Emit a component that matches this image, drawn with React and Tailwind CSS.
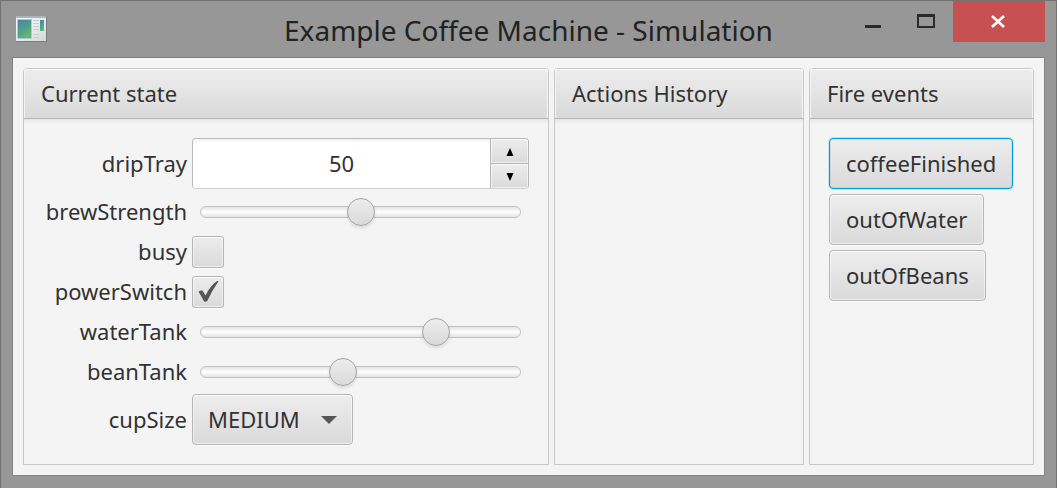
import React, { useState } from "react";

const raised =
  "border border-[#b5b5b5] bg-linear-to-b from-[#ededed] to-[#dadada] shadow-[inset_0_0_0_1px_rgba(255,255,255,0.55),inset_0_1px_0_#fcfcfc,0_1px_0_#fbfbfb]";

function AppIcon() {
  return (
    <svg className="ml-[15px] h-7 w-8 shrink-0" viewBox="0 0 32 28" aria-hidden="true">
      <defs>
        <linearGradient id="pane" x1="0" y1="0" x2="0.5" y2="1">
          <stop offset="0" stopColor="#4788a4" />
          <stop offset="0.5" stopColor="#4b9c90" />
          <stop offset="1" stopColor="#66b574" />
        </linearGradient>
        <linearGradient id="sheet" x1="0" y1="0" x2="1" y2="1">
          <stop offset="0" stopColor="#ffffff" />
          <stop offset="1" stopColor="#d5d8da" />
        </linearGradient>
      </defs>
      <rect x="0" y="2" width="31" height="25" fill="#7b7d7f" />
      <rect x="0" y="1" width="30" height="25" fill="url(#sheet)" />
      <rect x="0" y="1" width="30" height="2" fill="#a9b4c0" />
      <rect x="1" y="4" width="15" height="20" fill="#a9cdd0" />
      <rect x="2" y="5" width="13" height="18" fill="url(#pane)" />
      <g fill="#c9cccf">
        <rect x="17" y="5" width="6" height="1" />
        <rect x="17" y="8" width="6" height="1" />
        <rect x="17" y="11" width="6" height="1" />
        <rect x="17" y="14" width="6" height="1" />
        <rect x="17" y="19" width="6" height="1" />
        <rect x="17" y="22" width="6" height="1" />
      </g>
      <rect x="24" y="5" width="4" height="11" fill="url(#pane)" />
    </svg>
  );
}

function TitleBar() {
  return (
    <header className="flex h-14 items-start justify-between">
      <div className="flex h-14 w-[208px] items-center">
        <AppIcon />
      </div>
      <h1 className="flex h-14 grow items-center justify-center pt-px text-[28px] whitespace-nowrap text-[#222222]">
        Example Coffee Machine - Simulation
      </h1>
      <div className="flex w-[208px] justify-end pr-[11px]">
        <button type="button" aria-label="Minimize" className="flex h-10 w-13 shrink-0 items-center justify-center">
          <svg className="h-6 w-6" viewBox="0 0 24 24" aria-hidden="true">
            <rect x="2" y="16" width="16" height="3" fill="#2a2a2a" />
          </svg>
        </button>
        <button type="button" aria-label="Maximize" className="flex h-10 w-13 shrink-0 items-center justify-center">
          <svg className="h-6 w-6" viewBox="0 0 24 24" aria-hidden="true">
            <path fill="#2a2a2a" fillRule="evenodd" d="M2 5h18v14H2zM4 8v9h14V8z" />
          </svg>
        </button>
        <button type="button" aria-label="Close" className="flex h-[41px] w-[92px] shrink-0 items-center justify-center bg-[#c75050]">
          <svg className="h-6 w-6" viewBox="0 0 24 24" aria-hidden="true">
            <path d="M5 6l12 11M17 6L5 17" stroke="#fff" strokeWidth="2.6" />
          </svg>
        </button>
      </div>
    </header>
  );
}

function Panel({ title, className, children }) {
  return (
    <section className={`flex flex-col rounded-t-[4px] border border-[#c8c8c8] ${className}`}>
      <h2 className="flex h-[50px] items-center rounded-t-[3px] border-b border-[#b5b5b5] bg-linear-to-b from-[#ededed] to-[#dadada] px-[17px] pb-[2px] shadow-[inset_0_1px_0_#fcfcfc,inset_1px_0_0_#f3f3f3,inset_-1px_0_0_#f3f3f3]">
        {title}
      </h2>
      <div className="grow bg-linear-to-b from-[#e6e6e6] to-[#f4f4f4] to-[5px] px-[19px] py-[19px]">{children}</div>
    </section>
  );
}

function Spinner({ id, initial }) {
  const [value, setValue] = useState(initial);
  const step = (delta) => setValue((v) => Number(v) + delta);
  return (
    <div className="flex h-[51px] overflow-hidden rounded-[4px] border border-[#b9b9b9] border-b-[#cfcfcf] bg-white">
      <input
        id={id}
        type="text"
        inputMode="numeric"
        value={value}
        onChange={(e) => setValue(e.target.value)}
        className="w-0 grow bg-linear-to-b from-[#f0f0f0] to-white to-[4px] pb-[2px] text-center outline-none"
      />
      <div className="flex w-[38px] flex-col">
        <button type="button" aria-label="Increase" onClick={() => step(1)} className="flex grow items-center justify-center border-b border-l border-[#b5b5b5] bg-linear-to-b from-[#ededed] to-[#dadada] pt-[2px] shadow-[inset_0_0_0_1px_rgba(255,255,255,0.6)]">
          <svg className="h-2 w-2" viewBox="0 0 8 8" aria-hidden="true"><path d="M4 0L7.5 8H.5z" /></svg>
        </button>
        <button type="button" aria-label="Decrease" onClick={() => step(-1)} className="flex grow items-center justify-center border-l border-[#b5b5b5] bg-linear-to-b from-[#ededed] to-[#dadada] pt-[2px] shadow-[inset_0_0_0_1px_rgba(255,255,255,0.6)]">
          <svg className="h-2 w-2" viewBox="0 0 8 8" aria-hidden="true"><path d="M.5 0h7L4 8z" /></svg>
        </button>
      </div>
    </div>
  );
}

function Slider({ id, value }) {
  return (
    <div className="flex h-[35px] items-center px-2">
      <input
        id={id}
        type="range"
        defaultValue={value}
        className="h-7 w-full appearance-none bg-transparent [&::-webkit-slider-runnable-track]:h-3 [&::-webkit-slider-runnable-track]:rounded-full [&::-webkit-slider-runnable-track]:border [&::-webkit-slider-runnable-track]:border-[#c0c0c0] [&::-webkit-slider-runnable-track]:bg-linear-to-b [&::-webkit-slider-runnable-track]:from-[#e4e4e4] [&::-webkit-slider-runnable-track]:via-[#fefefe] [&::-webkit-slider-runnable-track]:to-[#e4e4e4] [&::-webkit-slider-thumb]:-mt-[9px] [&::-webkit-slider-thumb]:h-7 [&::-webkit-slider-thumb]:w-7 [&::-webkit-slider-thumb]:appearance-none [&::-webkit-slider-thumb]:rounded-full [&::-webkit-slider-thumb]:border [&::-webkit-slider-thumb]:border-[#a3a3a3] [&::-webkit-slider-thumb]:bg-linear-to-b [&::-webkit-slider-thumb]:from-[#ededed] [&::-webkit-slider-thumb]:to-[#dadada] [&::-webkit-slider-thumb]:shadow-[0_2px_3px_rgba(0,0,0,0.1)]"
      />
    </div>
  );
}

function Checkbox({ id, checked }) {
  return (
    <div className="flex h-[35px] items-center">
      <span className="grid">
        <input id={id} type="checkbox" defaultChecked={checked} className={`peer col-start-1 row-start-1 h-8 w-8 appearance-none rounded-[3px] ${raised}`} />
        <svg className="pointer-events-none invisible col-start-1 row-start-1 h-8 w-8 peer-checked:visible" viewBox="0 0 32 32" aria-hidden="true">
          <path fill="#565656" d="M6.5 15.5Q8.5 14 10.5 14.5L13.5 19.5Q18 10 25 5L26.5 5.2Q20 14.5 15.3 25Q13.5 26.5 12 25.2z" />
        </svg>
      </span>
    </div>
  );
}

function Select({ id, options, value }) {
  return (
    <div className="grid w-[161px]">
      <select id={id} defaultValue={value} className={`col-start-1 row-start-1 h-[51px] appearance-none rounded-[4px] pb-[2px] pl-[15px] ${raised}`}>
        {options.map((o) => (
          <option key={o}>{o}</option>
        ))}
      </select>
      <svg className="pointer-events-none col-start-1 row-start-1 mr-4 h-2 w-4 self-center justify-self-end" viewBox="0 0 16 8" aria-hidden="true">
        <path fill="#565656" d="M0 0h16L8 8z" />
      </svg>
    </div>
  );
}

function Label({ htmlFor }) {
  return (
    <label htmlFor={htmlFor} className="self-center pb-[2px] text-right">
      {htmlFor}
    </label>
  );
}

function EventButton({ name, focused }) {
  const look = focused
    ? "border border-[#039ed3] bg-linear-to-b from-[#ededed] to-[#dadada] shadow-[0_0_0_1px_rgba(3,158,211,0.2),inset_0_0_0_1px_rgba(3,158,211,0.12)]"
    : raised;
  return (
    <button type="button" className={`h-[51px] rounded-[4px] px-4 pb-[2px] ${look}`}>
      {name}
    </button>
  );
}

export default function App() {
  return (
    <div className="flex min-h-screen flex-col border border-[#737373] bg-[#979797] font-['Noto_Sans','Open_Sans',sans-serif] text-[22px] leading-8 text-[#323232]">
      <TitleBar />
      <main className="mx-[11px] mb-3 flex grow gap-[5px] border border-[#828282] bg-[#f4f4f4] p-[10px]">
        <Panel title="Current state" className="w-0 grow-[524]">
          <div className="grid grid-cols-[144px_minmax(0,1fr)] gap-[5px]">
            <Label htmlFor="dripTray" />
            <Spinner id="dripTray" initial={50} />
            <Label htmlFor="brewStrength" />
            <Slider id="brewStrength" value={50} />
            <Label htmlFor="busy" />
            <Checkbox id="busy" checked={false} />
            <Label htmlFor="powerSwitch" />
            <Checkbox id="powerSwitch" checked />
            <Label htmlFor="waterTank" />
            <Slider id="waterTank" value={76} />
            <Label htmlFor="beanTank" />
            <Slider id="beanTank" value={44} />
            <Label htmlFor="cupSize" />
            <Select id="cupSize" options={["SMALL", "MEDIUM", "LARGE"]} value="MEDIUM" />
          </div>
        </Panel>
        <Panel title="Actions History" className="w-0 grow-[248]" />
        <Panel title="Fire events" className="w-0 grow-[223]">
          <div className="flex flex-col items-start gap-[5px]">
            <EventButton name="coffeeFinished" focused />
            <EventButton name="outOfWater" />
            <EventButton name="outOfBeans" />
          </div>
        </Panel>
      </main>
    </div>
  );
}
